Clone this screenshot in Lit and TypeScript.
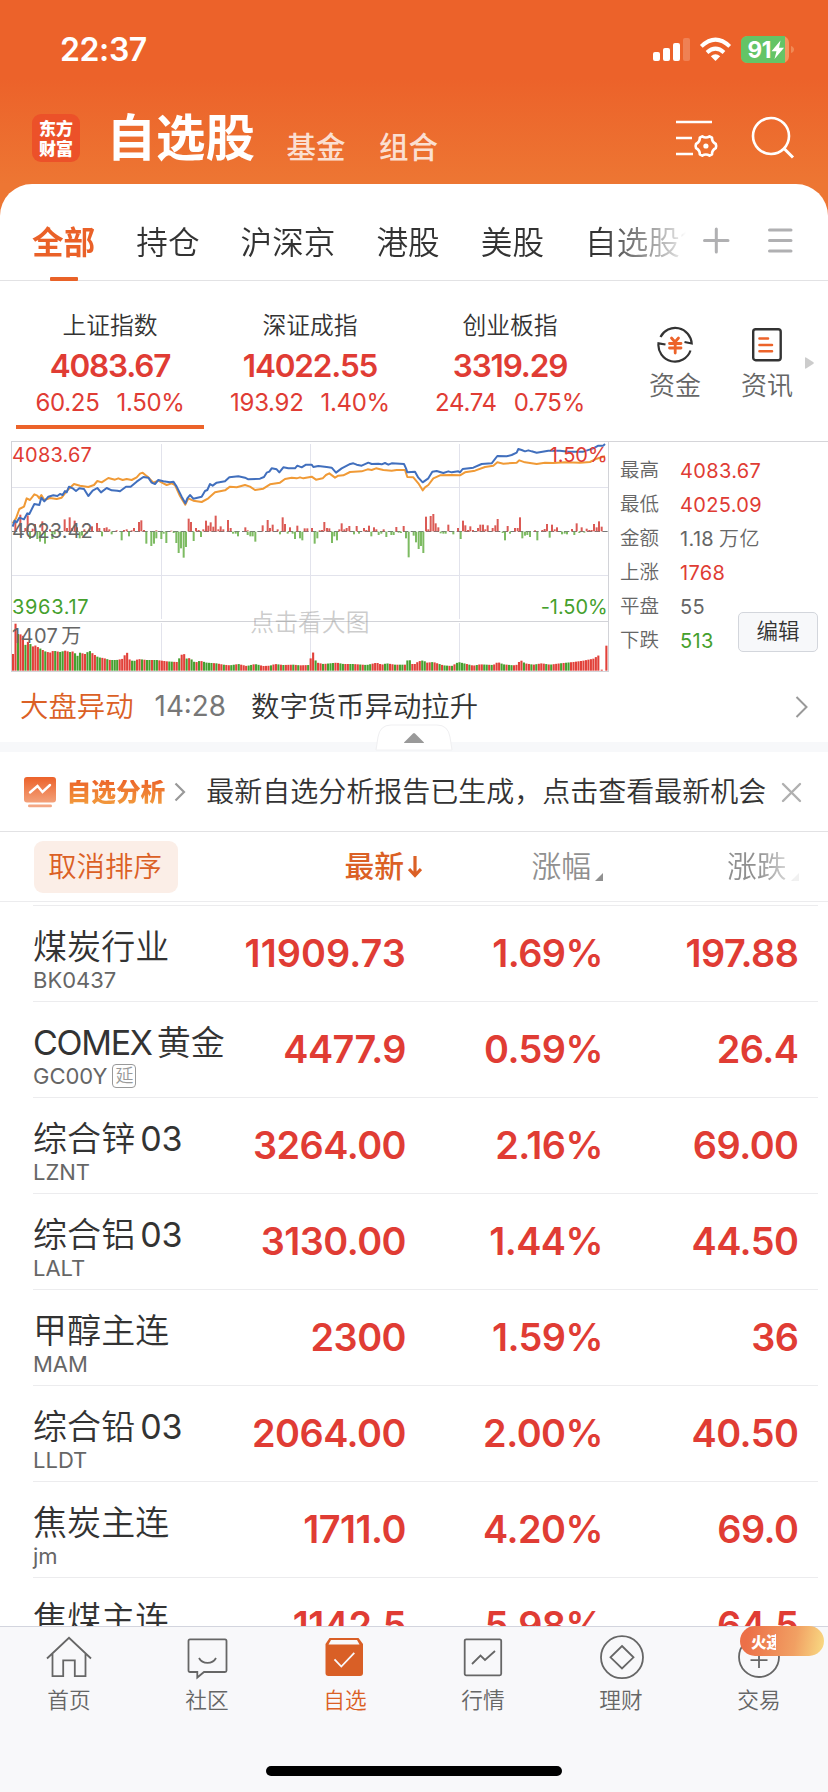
import { LitElement, html, svg, css } from "lit";
import { customElement } from "lit/decorators.js";
import { classMap } from "lit/directives/class-map.js";

type Pt = [number, number];

/* All plot data is in thirds of a pixel. */
const ORANGE =
  "38,280 48,265 58,237 72,230 80,205 90,210 103,193 112,197 118,205 124,195 133,210 150,204 170,207 185,203 203,180 222,162 240,167 265,171 282,165 292,153 305,157 325,144 345,149 355,145 368,150 380,147 395,150 410,142 420,131 428,128 436,135 445,142 460,158 475,152 490,160 500,165 515,160 525,165 540,198 556,224 565,205 580,212 605,216 625,205 645,187 675,181 690,170 710,172 735,165 750,170 765,180 790,176 810,163 840,158 855,147 875,143 890,145 900,142 910,145 935,140 948,149 968,145 978,135 988,130 1005,143 1015,137 1030,136 1050,126 1085,124 1103,118 1115,120 1128,115 1150,120 1175,122 1190,120 1215,120 1222,141 1240,142 1255,160 1268,181 1275,172 1285,165 1300,145 1320,136 1355,135 1380,136 1395,127 1425,122 1455,111 1480,107 1492,97 1510,101 1550,98 1558,91 1575,97 1610,102 1635,98 1660,99 1695,97 1740,98 1770,96 1790,86 1815,79";
const BLUE =
  "38,290 44,272 50,277 58,263 72,268 82,250 88,252 103,222 118,225 124,203 133,214 145,200 160,196 172,198 180,192 188,195 195,183 200,187 207,170 218,175 228,183 238,175 252,177 265,198 278,182 292,174 303,187 320,174 335,181 352,182 360,184 378,170 392,170 410,155 430,141 445,143 455,158 465,162 475,150 490,154 510,157 520,155 530,170 545,200 556,220 562,205 570,195 580,206 605,200 615,183 622,180 630,162 638,167 650,158 675,154 688,142 715,139 735,143 745,148 780,146 792,141 800,128 808,125 815,115 830,118 838,127 850,112 865,115 885,115 892,107 905,112 918,104 935,104 940,111 955,108 980,111 995,113 1008,128 1025,115 1048,103 1060,100 1070,104 1085,107 1105,98 1115,102 1135,101 1145,103 1155,99 1165,104 1175,100 1212,102 1218,115 1222,127 1245,125 1255,143 1268,157 1285,145 1297,125 1310,123 1330,129 1345,124 1355,127 1375,124 1380,127 1388,117 1420,113 1445,102 1475,100 1492,78 1520,79 1535,75 1550,68 1555,57 1565,60 1575,64 1585,61 1595,64 1610,68 1645,62 1680,62 1705,65 1750,65 1780,55 1795,47 1810,47 1815,42";

const UP: Pt[] = [[46,28],[61,50],[76,10],[83,48],[98,8],[105,22],[127,30],[150,6],[172,3],[194,36],[201,10],[209,42],[216,10],[224,32],[231,12],[253,6],[268,8],[276,15],[291,25],[298,10],[313,10],[320,12],[328,6],[350,3],[372,4],[380,6],[395,3],[402,10],[417,28],[424,33],[432,4],[469,3],[514,2],[566,38],[573,28],[588,10],[596,4],[610,6],[618,32],[625,17],[632,27],[640,14],[647,47],[655,6],[662,15],[670,6],[684,34],[692,10],[736,12],[743,3],[788,18],[803,34],[810,10],[818,20],[833,6],[848,42],[855,22],[870,12],[892,17],[914,9],[922,9],[936,10],[959,3],[966,4],[973,28],[981,10],[988,9],[1018,6],[1025,24],[1033,6],[1040,10],[1048,16],[1070,16],[1092,10],[1099,4],[1107,17],[1122,12],[1129,6],[1151,6],[1189,13],[1211,16],[1278,44],[1285,6],[1292,46],[1300,52],[1307,24],[1315,12],[1345,20],[1374,10],[1389,32],[1396,18],[1404,4],[1411,15],[1419,4],[1434,10],[1441,20],[1449,20],[1456,6],[1463,18],[1478,10],[1486,18],[1493,37],[1523,16],[1545,10],[1553,10],[1560,42],[1605,3],[1627,4],[1634,7],[1641,22],[1656,20],[1664,6],[1671,12],[1716,7],[1730,24],[1745,12],[1760,8],[1768,4],[1775,4],[1782,22],[1790,12],[1797,30],[1805,14]];
const DOWN: Pt[] = [[90,22],[112,22],[120,30],[135,36],[157,22],[164,8],[179,8],[239,20],[246,12],[261,6],[306,14],[335,8],[365,26],[387,14],[439,36],[454,43],[462,36],[469,20],[484,22],[491,6],[499,34],[521,4],[529,34],[536,64],[543,50],[551,78],[558,46],[581,28],[603,16],[699,6],[707,6],[714,14],[743,10],[751,14],[758,14],[766,30],[840,8],[863,6],[878,6],[885,22],[900,20],[907,26],[944,36],[952,20],[996,34],[1003,14],[1011,26],[1062,8],[1077,6],[1114,14],[1136,10],[1144,6],[1159,16],[1174,10],[1181,10],[1196,3],[1203,4],[1218,20],[1226,77],[1241,12],[1248,32],[1256,52],[1263,43],[1270,64],[1322,5],[1330,6],[1337,6],[1360,8],[1382,22],[1508,4],[1515,26],[1530,6],[1567,20],[1575,12],[1582,10],[1590,16],[1612,26],[1649,18],[1686,8],[1694,6],[1701,8],[1723,10],[1738,4],[1753,3]];

/* Volume: height anchors, read between by linear interpolation. */
const VOL: Pt[] = [[39,50],[46,143],[53,110],[68,108],[75,76],[85,88],[97,72],[105,76],[118,68],[135,58],[150,54],[160,60],[180,56],[195,60],[210,56],[220,58],[232,44],[240,54],[255,50],[268,60],[280,50],[295,40],[310,38],[330,32],[350,32],[370,36],[379,60],[388,34],[400,28],[415,35],[440,32],[470,32],[500,28],[530,26],[545,48],[551,52],[560,36],[570,38],[585,24],[600,30],[620,24],[650,22],[670,18],[690,16],[715,20],[740,14],[765,20],[790,14],[810,15],[825,20],[850,17],[880,18],[900,16],[928,17],[937,64],[944,34],[952,24],[970,20],[1010,24],[1030,20],[1060,20],[1100,17],[1130,24],[1145,18],[1160,22],[1185,18],[1215,18],[1226,38],[1235,20],[1245,20],[1255,28],[1270,31],[1280,24],[1300,26],[1330,16],[1355,14],[1375,26],[1400,20],[1420,15],[1440,19],[1480,17],[1493,26],[1510,19],[1540,16],[1553,18],[1560,33],[1575,22],[1600,18],[1625,22],[1650,18],[1680,22],[1720,26],[1750,30],[1780,36],[1799,48]];
const VOL_TONES = "rrgrrgrgrrrgrgrrrgrggrrgrgggrrggrrggrrgrgggrrrrrggrrgrggrggrrrrggrrgrrgrggrgrggggrgrrgrrggrgrrrggrggrr";

const volumeBars = () => {
  const out: { x: number; h: number; red: boolean }[] = [];
  for (let i = 0; i < 238; i++) {
    const x = 39 + i * 7.44;
    if (x > 1802) break;
    let k = 0;
    while (k < VOL.length - 2 && VOL[k + 1][0] < x) k++;
    const [x0, h0] = VOL[k];
    const [x1, h1] = VOL[k + 1];
    const t = Math.min(1, Math.max(0, (x - x0) / (x1 - x0)));
    /* The opening minutes, the midday spike and the last stretch close higher. */
    const forced = i === 120 || i === 121 || i > 225;
    out.push({ x, h: h0 + (h1 - h0) * t, red: forced || (i < 4 ? i !== 2 : VOL_TONES[i % VOL_TONES.length] === "r") });
  }
  out.push({ x: 1805, h: 3, red: true }, { x: 1819, h: 75, red: true });
  return out;
};

@customElement("market-chart")
class MarketChart extends LitElement {
  static styles = css`
    :host { display: block; width: 599px; height: 232px; flex: none; font-weight: 400; }
    svg { display: block; }
    text { font-family: Inter, "Noto Sans CJK SC", sans-serif; }
    .lab { font-size: 60px; letter-spacing: 0.2px; }
  `;
  render() {
    return html`<svg width="599" height="232" viewBox="33 33 1797 696">
      <g fill="none" stroke="#e2e3ec" stroke-width="3">
        <path d="M36 172.500H1824M36 436.500H1824M484.500 42V567M484.500 579V722M931.500 42V567M931.500 579V722M1378.500 42V567M1378.500 579V722" />
        <path stroke="#d2d3d8" d="M33 34.500H1830M34.500 33V726M1825.500 33V726M33 574.500H1827M33 724.500H1827" />
      </g>
      <path d="M36 304.500H1824" stroke="#777" stroke-width="3" stroke-dasharray="16 7" />
      ${UP.map(([x, h]) => svg`<rect x=${x - 3} y=${304 - h} width="6" height=${h} fill="#db5a55" />`)}
      ${DOWN.map(([x, h]) => svg`<rect x=${x - 3} y="305" width="6" height=${h} fill="#7dbb62" />`)}
      ${volumeBars().map((b) => svg`<rect x=${b.x - 3} y=${722 - b.h} width="6.300" height=${b.h} fill=${b.red ? "#e2413a" : "#46a02f"} />`)}
      <polyline points=${ORANGE} fill="none" stroke="#f09a36" stroke-width="6" stroke-linejoin="round" />
      <polyline points=${BLUE} fill="none" stroke="#416fbd" stroke-width="6" stroke-linejoin="round" />
      <text class="lab" x="36" y="95" fill="#e03c34" textLength="240">4083.67</text>
      <text class="lab" x="36" y="323" fill="#666" textLength="242">4023.42</text>
      <text class="lab" x="36" y="551" fill="#45a02d" textLength="230">3963.17</text>
      <text class="lab" x="36" y="639" fill="#666" textLength="138">1407</text>
      <text class="lab" x="184" y="639" fill="#666" font-size="58">万</text>
      <text class="lab" x="1649" y="95" fill="#e03c34" textLength="174">1.50%</text>
      <text class="lab" x="1622" y="551" fill="#45a02d" textLength="201">-1.50%</text>
      <text x="751" y="602" fill="#999" fill-opacity=".5" font-size="71.500" font-weight="350">点击看大图</text>
    </svg>`;
  }
}

const ROWS = [
  { n: ["煤炭行业"], c: "BK0437", v: ["11909.73", "1.69%", "197.88"] },
  { n: ["COMEX", "黄金"], c: "GC00Y", tag: "延", v: ["4477.9", "0.59%", "26.4"] },
  { n: ["综合锌", "03"], c: "LZNT", v: ["3264.00", "2.16%", "69.00"] },
  { n: ["综合铝", "03"], c: "LALT", v: ["3130.00", "1.44%", "44.50"] },
  { n: ["甲醇主连"], c: "MAM", v: ["2300", "1.59%", "36"] },
  { n: ["综合铅", "03"], c: "LLDT", v: ["2064.00", "2.00%", "40.50"] },
  { n: ["焦炭主连"], c: "jm", v: ["1711.0", "4.20%", "69.0"] },
  { n: ["焦煤主连"], c: "", v: ["1142.5", "5.98%", "64.5"] },
];

const INDEXES = [
  ["上证指数", "4083.67", "60.25", "1.50%"],
  ["深证成指", "14022.55", "193.92", "1.40%"],
  ["创业板指", "3319.29", "24.74", "0.75%"],
];

const STATS = [
  ["最高", "4083.67", "", "red"],
  ["最低", "4025.09", "", "red"],
  ["金额", "1.18", "万亿", "gray"],
  ["上涨", "1768", "", "red"],
  ["平盘", "55", "", "gray"],
  ["下跌", "513", "", "green"],
];

const NAV = [
  { t: "首页", i: svg`<path d="M1 22.500L23 1.800 45 22.500M6.500 18V40.200H17.200V24.300H28.800V40.200H39.500V18" />` },
  { t: "社区", i: svg`<path d="M6 3.300H41Q42.500 3.300 42.500 5V34.500Q42.500 36 41 36H20L13.300 41.500V36H6Q4.500 36 4.500 34.500V5Q4.500 3.300 6 3.300ZM15 22C18.500 28.500 28.500 28.500 32 22" />` },
  { t: "自选", i: svg`<g transform="translate(-1.500 .5)"><path fill="#d95f26" stroke="none" d="M9 1.500H38L42.500 7.500V36.500Q42.500 39.500 39.500 39.500H8Q5 39.500 5 36.500V7.500Z" /><path fill="#f8f8fa" stroke="none" d="M10.500 3.500H36.500L39 8H8Z" /><path stroke="#f8f8fa" d="M14 22.800L20.800 30 33.800 16.300" /></g>` },
  { t: "行情", i: svg`<rect x="4.700" y="3.300" width="36.500" height="36" rx="1.500" /><path d="M12 28L20.500 19.500 25 24 35 15" />` },
  { t: "理财", i: svg`<circle cx="24" cy="21.200" r="21" /><path d="M24 10L35.500 21.300 24 32.500 12.500 21.300Z" />` },
  { t: "交易", i: svg`<circle cx="23" cy="21" r="20" /><path d="M14.500 24.200H31.500M23 15V32" />` },
];

@customElement("app-root")
class AppRoot extends LitElement {
  static styles = css`
    :host { display: flex; flex-direction: column; width: 828px; height: 1792px; overflow: hidden; background: #fff; color: #333;
      font-family: Inter, "Noto Sans CJK SC", sans-serif; font-weight: 350; line-height: 1; white-space: nowrap; }
    * { box-sizing: border-box; }
    svg { display: block; flex: none; }
    .top { background: linear-gradient(#ec622a 0, #ec622a 78px, #ed7633 184px); height: 281px; flex: none; }
    .status { height: 98px; padding: 0 32px 0 60px; display: flex; justify-content: space-between; color: #fff; }
    .time { font-size: 32px; font-weight: 600; padding-top: 34px; letter-spacing: -0.4px; }
    .sys { margin-top: 35px; }
    .bar { height: 86px; display: flex; padding: 0 32px; color: #fff; }
    .logo { width: 48px; height: 48px; margin-top: 16px; border-radius: 9px; background: #ec5129; font: 900 17px/20px "Noto Sans CJK SC", sans-serif; text-align: center; padding-top: 4px; }
    .title { font-size: 49.500px; font-weight: 700; margin: 16px 0 0 26.500px; }
    .sub { font-size: 29.500px; font-weight: 500; color: rgba(255,255,255,.8); margin: 35px 0 0 33.500px; }
    .sub.first { margin-left: 31.500px; }
    .bar svg { margin-left: auto; margin-top: 18px; }
    .tabs { height: 97px; background: #fff; border-radius: 32px 32px 0 0; border-bottom: 1px solid #e2e2e4; display: flex; }
    .tablist { width: 686px; height: 97px; padding: 0 0 0 32px; display: flex; gap: 41.100px; overflow: hidden; font-size: 31.600px;
      mask-image: linear-gradient(90deg, #000 600px, rgba(0,0,0,.25) 672px, transparent 686px); }
    .tab { display: flex; flex-direction: column; align-items: center; justify-content: space-between; padding-top: 43px; }
    .tab.on { color: #ea6128; font-weight: 700; }
    .line { width: 28px; height: 4px; border-radius: 1px; background: #e96228; }
    .tabs svg { margin: 41px 0 0 17px; }
    .idx { height: 160px; flex: none; display: flex; padding-left: 16px; gap: 12px; }
    .cell { width: 188px; height: 148px; display: flex; flex-direction: column; align-items: center; }
    .cell.on { border-bottom: 4px solid #ec632a; }
    .cname { font-size: 23.800px; margin-top: 33px; }
    .cval { font-size: 31.500px; font-weight: 600; color: #e03c34; margin-top: 12px; letter-spacing: -1.150px; }
    .cpct { font-size: 24px; font-weight: 400; color: #e03c34; margin-top: 10px; display: flex; gap: 17px; letter-spacing: -.3px; }
    .tool { width: 52px; margin-left: 33px; display: flex; flex-direction: column; align-items: center; gap: 10px; padding-top: 44px; color: #666; font-size: 26px; }
    .tool.b { margin-left: 28px; }
    .idx .more { margin: 76px 0 0 0; }
    .mid { height: 231px; flex: none; display: flex; padding-left: 11px; }
    .stats { flex: 1; border-top: 1px solid #d5d5d9; position: relative; padding: 12px 0 0 10px; }
    .stat { height: 34px; display: flex; align-items: center; font-size: 19.500px; color: #666; }
    .sv { margin-left: 21px; display: flex; gap: 5px; letter-spacing: .35px; font-size: 20px; }
    .sv span { font-weight: 400; }
    .sv.red { color: #e03c34; }
    .sv.green { color: #45a02d; }
    .edit { position: absolute; left: 128px; top: 170px; width: 80px; height: 40px; border: 1px solid #d3d6dc; border-radius: 5px; background: #f7f8fa; font-size: 21.500px; display: grid; place-items: center; color: #333; }
    .news { height: 70px; flex: none; padding: 0 20px; display: flex; align-items: center; font-size: 28.400px; }
    .news .k { color: #db6025; }
    .news .t { color: #777; margin: 0 25px 0 21px; font-size: 27.800px; font-weight: 400; }
    .news svg { margin-left: auto; }
    .band { height: 10px; flex: none; background: #f7f8fa; position: relative; }
    .pull { position: absolute; left: 375px; top: -18px; }
    .ana { height: 80px; flex: none; border-bottom: 1px solid #e2e2e4; display: flex; align-items: center; padding: 1px 26px 0 24px; }
    .ana .g { font-size: 24.700px; font-weight: 900; margin-left: 10.500px; background: linear-gradient(#ec642a, #f2993c); background-clip: text; -webkit-background-clip: text; color: transparent; }
    .ana .m { font-size: 28px; margin: 0 0 0 20px; }
    .ana .ar { margin-left: 9px; }
    .ana .x { margin-left: auto; }
    .cols { height: 70px; flex: none; border-bottom: 1px solid #ececee; display: grid; grid-template-columns: 34px 144px 244px 181px 195.500px; align-items: center; color: #909090; font-size: 29.800px; }
    .cancel { grid-column: 2; height: 52px; border-radius: 9px; background: #fbeee7; color: #db6025; font-size: 28.400px; display: grid; place-items: center; padding: 1px 2px 0 0; }
    .h { display: flex; justify-content: flex-end; align-items: center; gap: 4px; padding-top: 1px; }
    .h.on { color: #db6025; font-weight: 500; }
    .h .tri { margin-top: 20px; }
    .fade { mask-image: linear-gradient(90deg, #000 155px, rgba(0,0,0,.2) 192px); }
    .list { flex: 1; overflow: hidden; padding: 3px 10px 0 33px; min-height: 0; }
    .row { height: 96px; border-top: 1px solid #ececee; display: grid; grid-template-columns: 180px 193px 197px 195.500px; }
    .nm { font-size: 34px; display: flex; gap: 5px; margin-top: 24px; align-items: center; height: 34px; letter-spacing: .1px; }
    .nm .latin { font-weight: 400; letter-spacing: -.3px; }
    .nm .caps { letter-spacing: -1.300px; }
    .cd { font-size: 22px; font-weight: 400; color: #666; margin-top: 4px; display: flex; align-items: center; gap: 5px; height: 24px; }
    .tag { width: 24px; height: 24px; border: 1px solid #999; border-radius: 4px; font-size: 18px; font-weight: 350; display: grid; place-items: center; color: #999; }
    .v { font-size: 37.800px; font-weight: 600; color: #e03c34; text-align: right; padding-top: 29px; letter-spacing: -.5px; }
    .v.long { letter-spacing: .1px; }
    .nav { height: 166px; flex: none; background: #f8f8fa; border-top: 1px solid #d3d5de; display: flex; flex-direction: column; justify-content: space-between; align-items: center; padding-bottom: 16px; }
    .items { display: grid; grid-template-columns: repeat(6, 138px); }
    .it { display: flex; flex-direction: column; align-items: center; padding-top: 9px; gap: 11px; font-size: 21.700px; color: #666; position: relative; }
    .it.on { color: #db6025; }
    .home { width: 296px; height: 10px; border-radius: 5px; background: #000; }
    .badge { position: absolute; left: 50px; top: -1px; width: 84px; height: 30px; border-radius: 15px; background: linear-gradient(100deg, #ec7048 10%, #f1a063 65%, #f9dc84); color: #fff; font: 900 15.500px/30px "Noto Sans CJK SC", sans-serif; padding-left: 11px; }
    .clip { display: block; width: 25px; overflow: hidden; }
  `;

  render() {
    return html`
      <div class="top">
        <div class="status">
          <span class="time">22:37</span>
          <svg class="sys" width="143" height="30" viewBox="0 0 143 30">
            <g fill="#fff">
              <rect x="0" y="17" width="7" height="9" rx="2" /><rect x="10" y="13" width="7" height="13" rx="2" /><rect x="20" y="8" width="7" height="18" rx="2" /><rect x="30" y="3" width="7" height="23" rx="2" opacity=".2" />
              <path d="M62.500 26L57.800 21.300Q62.500 17 67.200 21.300Z" />
            </g>
            <g fill="none" stroke="#fff" stroke-width="4"><path d="M54 17.400Q62.500 10 71 17.400" /><path d="M48.300 11.400Q62.500 -2 76.700 11.400" /></g>
            <rect x="88" y="1" width="48" height="27" rx="6.500" fill="#f3975f" />
            <path fill="#64c466" d="M94.500 1H132V28H94.500Q88 28 88 21.500V7.500Q88 1 94.500 1Z" />
            <path d="M138 11Q141 12 141 14.500 141 17 138 18Z" fill="#f08a55" />
            <text x="94.500" y="22.500" font-size="22.500" font-weight="700" fill="#fff" textLength="24">91</text>
            <path fill="#fff" d="M127.500 5.500L118.500 16.300H123.500L121.500 24L131 12.700H126Z" />
          </svg>
        </div>
        <div class="bar">
          <div class="logo">东方<br />财富</div>
          <div class="title">自选股</div>
          <div class="sub first">基金</div>
          <div class="sub">组合</div>
          <svg width="120" height="44" viewBox="0 0 120 44" fill="none" stroke="#fff" stroke-width="2.600">
            <path d="M0 6H36M0 22H16M0 38H17" />
            <path stroke-linejoin="round" transform="translate(-1 0)" d="M27.300 20.300Q30.900 22.600 34.500 20.300L37 21.700Q36.800 25.800 40.800 28 Q41.600 30 40.800 32Q36.800 34.200 37 38.300L34.500 39.700Q30.900 37.400 27.300 39.700L24.800 38.300Q25 34.200 21 32 20.200 30 21 28 25 25.800 24.800 21.700Z" />
            <circle cx="29.900" cy="30" r="2.600" fill="#fff" stroke="none" />
            <circle cx="95" cy="20" r="18" /><path d="M108 32.500L117 41.500" stroke-width="3" />
          </svg>
        </div>
        <div class="tabs">
          <div class="tablist">
            <div class="tab on">全部<div class="line"></div></div>
            ${["持仓", "沪深京", "港股", "美股", "自选股1"].map((t) => html`<div class="tab">${t}</div>`)}
          </div>
          <svg width="92" height="32" viewBox="0 0 92 32" fill="none" stroke="#b0b0b2" stroke-width="3" stroke-linecap="round"><path d="M1.500 15.500H25M13.300 4V27M66.500 5H88M66.500 15.500H88M66.500 26H88" /></svg>
        </div>
      </div>

      <div class="idx">
        ${INDEXES.map(
          (d, i) => html`<div class=${classMap({ cell: true, on: i === 0 })}>
            <div class="cname">${d[0]}</div><div class="cval">${d[1]}</div><div class="cpct"><span>${d[2]}</span><span>${d[3]}</span></div>
          </div>`
        )}
        <div class="tool">
          <svg width="38" height="38" viewBox="0 0 38 38" fill="none" stroke="#333" stroke-width="2.200">
            <path d="M4.500 12A16.500 16.500 0 0 1 35.700 18.500L28.500 17M34.500 25.500A16.500 16.500 0 0 1 2.500 18.300L9.500 19.500" />
            <path stroke="#ec632a" stroke-width="2.800" stroke-linecap="round" d="M15.500 13L19 17 22.500 13M13.500 18.500H25M13.500 23H25M19.200 18V28" />
          </svg>资金
        </div>
        <div class="tool b">
          <svg width="38" height="38" viewBox="0 0 38 38" fill="none" stroke="#333" stroke-width="2.400">
            <rect x="5.200" y="4.200" width="27.500" height="31" rx="2.500" />
            <path stroke="#ec632a" stroke-width="2.600" stroke-linecap="round" d="M11.500 13.500H20M11.500 20H24M11.500 26.300H24" />
          </svg>资讯
        </div>
        <svg class="more" width="9" height="12" viewBox="0 0 9 12"><path fill="#ccc" d="M0 1Q0 0 1 .4L8.500 5.300Q9 6 8.500 6.700L1 11.600Q0 12 0 11Z" /></svg>
      </div>

      <div class="mid">
        <market-chart></market-chart>
        <div class="stats">
          ${STATS.map((s) => html`<div class="stat">${s[0]}<span class=${"sv " + s[3]}><span>${s[1]}</span>${s[2]}</span></div>`)}
          <div class="edit">编辑</div>
        </div>
      </div>

      <div class="news">
        <span class="k">大盘异动</span><span class="t">14:28</span><span>数字货币异动拉升</span>
        <svg width="13" height="22" viewBox="0 0 13 22" fill="none" stroke="#999" stroke-width="2"><path d="M1.500 1L11.500 11 1.500 21" /></svg>
      </div>
      <div class="band">
        <svg class="pull" width="78" height="27" viewBox="0 0 78 27">
          <path d="M1 26L3 13Q5 1 16 1H62Q73 1 75 13L77 26" fill="#fff" stroke="#efeff1" /><path d="M1 26H77" stroke="#f0f0f2" />
          <path d="M29 18.500L38 9.500Q39 8.500 40 9.500L49 18.500Q49 19 48 19H30Q29 19 29 18.500Z" fill="#999" />
        </svg>
      </div>
      <div class="ana">
        <svg width="32" height="32" viewBox="0 0 32 32">
          <defs><linearGradient id="g" x2="0" y2="1"><stop stop-color="#ec622a" /><stop offset="1" stop-color="#f3a17a" /></linearGradient></defs>
          <rect y="1" width="32" height="25.500" rx="3" fill="url(#g)" /><rect x="4" y="28.500" width="24" height="2.800" rx="1.400" fill="#f4a784" />
          <path d="M6 16.500L13.500 10 18.500 16 26 9" fill="none" stroke="#fff" stroke-width="2.400" stroke-linecap="round" />
        </svg>
        <span class="g">自选分析</span>
        <svg class="ar" width="12" height="20" viewBox="0 0 12 20" fill="none" stroke="#999" stroke-width="2.200"><path d="M1.500 1.500L10 10 1.500 18.500" /></svg>
        <span class="m">最新自选分析报告已生成，点击查看最新机会</span>
        <svg class="x" width="21" height="21" viewBox="0 0 21 21" stroke="#b0b0b0" stroke-width="2.400" stroke-linecap="round"><path d="M2 2L19 19M19 2L2 19" /></svg>
      </div>
      <div class="cols">
        <div class="cancel">取消排序</div>
        <div class="h on">最新<svg width="14" height="22" viewBox="0 0 14 22" fill="none" stroke="#db6025" stroke-width="3.200"><path d="M7 0V19.500M1 13L7 19.500 13 13" /></svg></div>
        <div class="h">涨幅<svg class="tri" width="8" height="8"><path d="M8 0V8H0Z" fill="#909090" /></svg></div>
        <div class="h fade">涨跌<svg class="tri" width="8" height="8"><path d="M8 0V8H0Z" fill="#bbb" /></svg></div>
      </div>

      <div class="list">
        ${ROWS.map(
          (r) => html`<div class="row">
            <div>
              <div class="nm">${r.n.map((p) => html`<span class=${classMap({ latin: /[A-Z0-9]/.test(p), caps: /[A-Z]/.test(p) })}>${p}</span>`)}</div>
              <div class="cd">${r.c}${r.tag ? html`<span class="tag">${r.tag}</span>` : ""}</div>
            </div>
            ${r.v.map((v) => html`<div class=${classMap({ v: true, long: v.length > 7 })}>${v}</div>`)}
          </div>`
        )}
      </div>

      <div class="nav">
        <div class="items">
          ${NAV.map(
            (n, i) => html`<div class=${classMap({ it: true, on: i === 2 })}>
              <svg width="47" height="43" viewBox="0 0 47 43" fill="none" stroke="#666" stroke-width="1.800" overflow="visible">${n.i}</svg>${n.t}
              ${i === 5 ? html`<div class="badge"><span class="clip">火速</span></div>` : ""}
            </div>`
          )}
        </div>
        <div class="home"></div>
      </div>
    `;
  }
}
